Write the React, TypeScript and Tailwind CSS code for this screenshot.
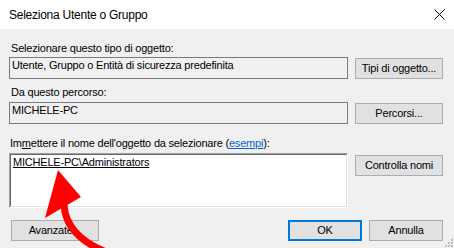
import React from "react";

const btn =
  "flex items-center justify-center h-[21px] bg-[#e1e1e1] border border-[#adadad] text-[11px] leading-[13px] tracking-[-0.2px] text-black";

export default function App() {
  return (
    <div
      className="relative w-[454px] h-[248px] bg-[#f0f0f0] overflow-hidden text-black"
      style={{ fontFamily: '"Liberation Sans", Arial, sans-serif' }}
    >
      {/* Title bar */}
      <div className="h-[29px] bg-white flex items-start justify-between">
        <div className="pl-[9px] pt-[8px] text-[12px] leading-[15px] tracking-[-0.25px]">
          Seleziona Utente o Gruppo
        </div>
        <svg className="mt-[9px] mr-[9px]" width="11" height="11" viewBox="0 0 11 11">
          <path d="M0.5 0.5 L10.5 10.5 M10.5 0.5 L0.5 10.5" stroke="#000" strokeWidth="1" fill="none" />
        </svg>
      </div>

      {/* Body */}
      <div className="pl-[9px] pr-[11px] text-[11px] leading-[13px] tracking-[-0.2px]">
        <div className="mt-[13px] pl-[2px]">Selezionare questo tipo di oggetto:</div>
        <div className="mt-[2px] flex gap-[7px] items-start">
          <div className="w-[339px] h-[22px] border border-[#7a7a7a] pl-[2px] pt-[1px] whitespace-nowrap overflow-hidden">
            Utente, Gruppo o Entità di sicurezza predefinita
          </div>
          <div className={`${btn} w-[88px] mt-[1px]`}>Tipi di oggetto...</div>
        </div>

        <div className="mt-[7px] pl-[2px]">Da questo percorso:</div>
        <div className="mt-[3px] flex gap-[7px] items-start">
          <div className="w-[339px] h-[22px] border border-[#7a7a7a] pl-[2px] pt-[1px]">MICHELE-PC</div>
          <div className={`${btn} w-[88px] mt-[1px]`}>Percorsi...</div>
        </div>

        <div className="mt-[13px] pl-[1px]">
          Im<span className="underline">m</span>ettere il nome dell&apos;oggetto da selezionare (
          <span className="text-[#0066cc] underline">esempi</span>):
        </div>
        <div className="mt-[3px] flex gap-[7px] items-start">
          <div className="w-[339px] h-[55px] border-t border-l border-[#a0a0a0] border-b-white border-r-white border-b border-r">
            <div className="h-full bg-white border-t border-l border-t-[#696969] border-l-[#696969] border-b border-r border-b-[#e3e3e3] border-r-[#e3e3e3] pl-[2px] pt-[1px]">
              <span className="underline">MICHELE-PC\Administrators</span>
            </div>
          </div>
          <div className={`${btn} w-[88px] mt-[2px]`}>Controlla nomi</div>
        </div>

        <div className="mt-[12px] flex items-start justify-between">
          <div className={`${btn} w-[88px] ml-[2px]`}>Avanzate...</div>
          <div className="flex gap-[7px]">
            <div className="flex items-center justify-center w-[74px] h-[21px] bg-[#e1e1e1] border-2 border-[#0078d7]">OK</div>
            <div className={`${btn} w-[74px]`}>Annulla</div>
          </div>
        </div>
      </div>

      {/* Resize grip */}
      <svg className="absolute left-[445px] top-[239px]" width="9" height="9" viewBox="0 0 9 9">
        <rect x="6" y="0" width="2" height="2" fill="#bcbcbc" />
        <rect x="3" y="3" width="2" height="2" fill="#bcbcbc" />
        <rect x="6" y="3" width="2" height="2" fill="#bcbcbc" />
        <rect x="0" y="6" width="2" height="2" fill="#bcbcbc" />
        <rect x="3" y="6" width="2" height="2" fill="#bcbcbc" />
        <rect x="6" y="6" width="2" height="2" fill="#bcbcbc" />
      </svg>

      {/* Red annotation arrow */}
      <svg className="absolute left-0 top-0 pointer-events-none" width="454" height="248" viewBox="0 0 454 248">
        <path d="M64 205 Q66 236 106 252" stroke="#ff0000" strokeWidth="7" fill="none" />
        <polygon points="58,170 45,218 81,197" fill="#ff0000" />
      </svg>
    </div>
  );
}
